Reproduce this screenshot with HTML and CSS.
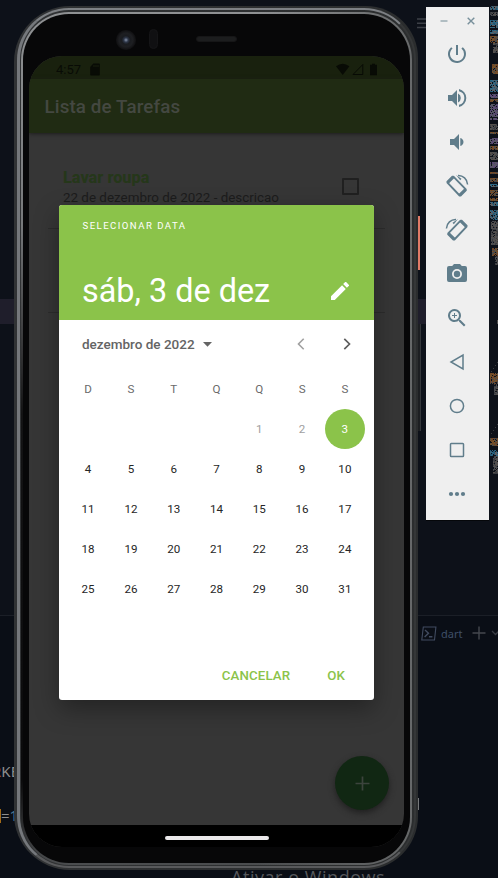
FILE: index.html
```html
<!DOCTYPE html>
<html lang="pt-BR">
<head>
<meta charset="utf-8">
<title>Lista de Tarefas</title>
<link rel="stylesheet" href="styles.css">
</head>
<body>
<div class="desktop">
  <div class="editor">
    <div class="line-highlight"></div>
    <div class="panel-border"></div>
    <svg class="menu-lines" width="9" height="11" viewBox="0 0 9 11"><path d="M0 1h9M0 5.2h9M0 9.4h9" stroke="#3d4047" stroke-width="1.5"/></svg>
    <div class="terminal-tab">
      <svg width="16" height="15" viewBox="0 0 16 15" fill="none" stroke="#414b60" stroke-width="1.1"><path d="M2.3 1h12.6l-1.4 13H.8z"/><path d="M4 4l3.500 3.200L3.600 11M8 10.700h3.400" stroke-width="1.4"/></svg>
      <span>dart</span>
      <svg class="tab-plus" width="14" height="14" viewBox="0 0 14 14"><path d="M7 .5v13M.5 7h13" stroke="#45484f" stroke-width="1.4"/></svg>
      <svg width="9" height="6" viewBox="0 0 9 6" fill="none"><path d="M1 1l3.500 3.500L8 1" stroke="#383b43" stroke-width="1.3"/></svg>
    </div>
    <div class="code code-a"><b>R</b>KE</div>
    <div class="code code-b"><i></i>=<em>1</em></div>
    <div class="watermark">Ativar o Windows</div>
    <svg class="minimap" id="minimap" width="8" height="480" viewBox="0 0 8 480"></svg>
  </div>

  <div class="side-key power"></div>
  <div class="side-key volume"></div>
  <div class="side-key edge-top"></div>
  <div class="side-key edge-bottom"></div>

  <div class="phone">
    <div class="bezel">
      <div class="camera"></div>
      <div class="sensor"></div>
      <div class="speaker"></div>
      <div class="screen">
        <div class="statusbar">
          <span>4:57</span>
          <svg class="sd" width="10" height="13" viewBox="0 0 10 13"><path d="M3.300.5H9a.8.8 0 0 1 .8.8v10.400a.8.8 0 0 1-.8.8H1a.8.8 0 0 1-.8-.8V4z" fill="#080b05"/><path d="M4 2v2M6 2v2M8 2v2" stroke="#19210e"/></svg>
          <svg class="status-right" width="42" height="13" viewBox="0 0 42 13"><path d="M0 3.300Q6.700-1.700 13.400 3.300L6.700 12z" fill="#080b05"/><path d="M17 11.500L26.800 1.500v10z" fill="none" stroke="#080b05" stroke-width="1"/><path d="M36 .7h3v1.100h2V12.200h-7V1.800h2z" fill="#080b05"/></svg>
        </div>
        <div class="appbar">Lista de Tarefas</div>
        <div class="list">
          <div class="task">
            <div><h2>Lavar roupa</h2><p>22 de dezembro de 2022 - descricao</p></div>
            <div class="checkbox"></div>
          </div>
          <div class="task second"></div>
        </div>
        <div class="navbar"><div class="pill"></div></div>
        <div class="fab"><svg width="15" height="15" viewBox="0 0 15 15"><path d="M7.500.5v14M.5 7.500h14" stroke="#3c443d" stroke-width="1.7"/></svg></div>
      </div>
    </div>
  </div>

  <div class="dialog">
    <div class="dialog-head">
      <div class="overline">SELECIONAR DATA</div>
      <div class="headline"><span>sáb, 3 de dez</span>
        <svg width="18" height="18" viewBox="3 3 18 18"><path d="M3 17.250V21h3.750L17.810 9.940l-3.750-3.750L3 17.250zM20.710 7.040a1 1 0 0 0 0-1.410l-2.340-2.340a1 1 0 0 0-1.410 0l-1.830 1.830 3.750 3.750 1.830-1.830z" fill="#fff"/></svg>
      </div>
    </div>
    <div class="month">
      <span>dezembro de 2022</span>
      <svg width="9" height="5" viewBox="0 0 9 5"><path d="M0 0h9L4.500 4.700z" fill="#646464"/></svg>
      <svg class="prev" width="8" height="12" viewBox="0 0 8 12" fill="none"><path d="M6.700.8L1.500 6l5.200 5.200" stroke="#a0a0a0" stroke-width="1.6"/></svg>
      <svg class="next" width="8" height="12" viewBox="0 0 8 12" fill="none"><path d="M1.300.8L6.500 6l-5.200 5.200" stroke="#5d5d5d" stroke-width="1.7"/></svg>
    </div>
    <div class="calendar">
      <span class="wd">D</span><span class="wd">S</span><span class="wd">T</span><span class="wd">Q</span><span class="wd">Q</span><span class="wd">S</span><span class="wd">S</span>
      <span></span><span></span><span></span><span></span><span class="past">1</span><span class="past">2</span><span class="selected">3</span>
      <span>4</span><span>5</span><span>6</span><span>7</span><span>8</span><span>9</span><span>10</span>
      <span>11</span><span>12</span><span>13</span><span>14</span><span>15</span><span>16</span><span>17</span>
      <span>18</span><span>19</span><span>20</span><span>21</span><span>22</span><span>23</span><span>24</span>
      <span>25</span><span>26</span><span>27</span><span>28</span><span>29</span><span>30</span><span>31</span>
    </div>
    <div class="actions"><span>CANCELAR</span><span>OK</span></div>
  </div>

  <div class="toolbar">
    <div class="window-buttons">
      <svg width="8" height="8" viewBox="0 0 8 8"><path d="M.5 4h7" stroke="#8fa2aa" stroke-width="1.3"/></svg>
      <svg width="8" height="8" viewBox="0 0 8 8"><path d="M.7.7l6.600 6.600M7.300.7L.7 7.300" stroke="#78909b" stroke-width="1.4"/></svg>
    </div>
    <div class="tool"><svg viewBox="0 0 24 24"><path d="M13 3h-2v10h2V3zm4.830 2.170l-1.420 1.420A6.920 6.920 0 0 1 19 12a7 7 0 1 1-11.420-5.420L6.170 5.170A9 9 0 1 0 21 12a8.940 8.940 0 0 0-3.170-6.830z"/></svg></div>
    <div class="tool"><svg viewBox="0 0 24 24"><path d="M3 9v6h4l5 5V4L7 9H3zM13 7.500v9a5 5 0 0 0 0-9zM14 3v2.200a7 7 0 0 1 0 13.600V21a9.200 9.200 0 0 0 0-18z"/></svg></div>
    <div class="tool"><svg viewBox="0 0 24 24"><path d="M5 9v6h4l5 5V4L9 9H5zm13.500 3A4.500 4.500 0 0 0 15.300 8v8a4.500 4.500 0 0 0 3.200-4z"/></svg></div>
    <div class="tool"><svg viewBox="0 0 24 24"><path class="device" d="M8.400 2.700L2.400 8.700 14.600 21.500 20.800 15.300z"/><path class="device-edge" d="M8.400 2.700L2.400 8.700M14.600 21.500L20.800 15.300"/><path class="arc" d="M13 1.500C18 1.300 22.300 5 22.600 10.500"/><path d="M11 1l5.500 3.700-1.300 1.500z"/></svg></div>
    <div class="tool flip"><svg viewBox="0 0 24 24"><path class="device" d="M8.400 2.700L2.400 8.700 14.600 21.500 20.800 15.300z"/><path class="device-edge" d="M8.400 2.700L2.400 8.700M14.600 21.500L20.800 15.300"/><path class="arc" d="M13 1.500C18 1.300 22.300 5 22.600 10.500"/><path d="M11 1l5.500 3.700-1.300 1.500z"/></svg></div>
    <div class="tool"><svg viewBox="0 0 24 24"><circle cx="12" cy="12" r="3.200"/><path d="M9 2L7.200 4H4a2 2 0 0 0-2 2v12a2 2 0 0 0 2 2h16a2 2 0 0 0 2-2V6a2 2 0 0 0-2-2h-3.200L15 2H9zm3 15a5 5 0 1 1 0-10 5 5 0 0 1 0 10z"/></svg></div>
    <div class="tool"><svg viewBox="0 0 24 24"><path d="M15.500 14h-.79l-.28-.27A6.500 6.500 0 1 0 13.730 14.430l.27.28v.79l5 4.990L20.490 19l-4.990-5zm-6 0a4.500 4.500 0 1 1 0-9 4.500 4.500 0 0 1 0 9zM9 7h1v2h2v1h-2v2H9v-2H7V9h2z"/></svg></div>
    <div class="tool line"><svg viewBox="0 0 24 24"><path d="M18 5v14L6 12z"/></svg></div>
    <div class="tool line"><svg viewBox="0 0 24 24"><circle cx="12" cy="12" r="6.600"/></svg></div>
    <div class="tool line"><svg viewBox="0 0 24 24"><rect x="5.500" y="5.500" width="13" height="13" rx=".8"/></svg></div>
    <div class="tool"><svg viewBox="0 0 24 24"><circle cx="6" cy="12" r="2.100"/><circle cx="12" cy="12" r="2.100"/><circle cx="18" cy="12" r="2.100"/></svg></div>
  </div>
</div>
<script src="minimap.js"></script>
</body>
</html>
```
FILE: styles.css
```css
* { box-sizing: border-box; }
body { margin: 0; font-family: Roboto, sans-serif; background: #0d1017; }
svg { display: block; flex: none; }
.desktop { position: relative; width: 498px; height: 878px; overflow: hidden; background: #0d1119; }
.editor { position: absolute; inset: 0; }
.line-highlight { position: absolute; top: 299px; left: 0; width: 426px; height: 25px; background: #1f1e2b; }
.panel-border { position: absolute; top: 615px; left: 0; right: 0; height: 263px; border-top: 1px solid #1b1f27; background: #0a0e16; }
.menu-lines { position: absolute; left: 417px; top: 18px; }
.terminal-tab { position: absolute; left: 421px; top: 624px; height: 18px; display: flex; align-items: center; color: #3f4f67; font: 11px "Noto Sans", sans-serif; }
.terminal-tab span { margin-left: 4px; }
.tab-plus { margin: 0 5px 0 10px; }
.code { position: absolute; font: 15px/20px "Noto Sans", sans-serif; color: #8d8d8d; white-space: nowrap; }
.code b { color: #8c462f; font-weight: 400; }
.code em { color: #4a7891; font-style: normal; }
.code i { width: 1px; height: 14px; background: #a46b18; display: inline-block; vertical-align: -2px; }
.code-a { left: -8px; top: 761px; }
.code-b { left: 0; top: 805px; }
.watermark { position: absolute; left: 231px; top: 865px; font: 18px/24px "Open Sans", sans-serif; letter-spacing: .55px; color: #56585c; white-space: nowrap; }
.minimap { position: absolute; left: 490px; top: 0; }

.side-key { position: absolute; left: 417px; width: 3px; }
.power { top: 216px; height: 54px; background: #e07a67; }
.volume { top: 324px; height: 107px; width: 4px; background: #1d1f22; border-right: 1px solid #33363a; }
.edge-top { top: 80px; height: 137px; width: 1px; background: #55585b; left: 417px; }
.edge-bottom { top: 798px; height: 12px; width: 2px; background: #77797b; }

.phone { position: absolute; isolation: isolate; left: 14px; top: 6px; width: 404px; height: 864px; border-radius: 56px 52px 54px 56px; padding: 3px; background: linear-gradient(90deg, #303234, #2b2d2e); }
.phone::before { content: ""; position: absolute; inset: 2px 2px 2px 3px; border-radius: 52px; border: 2px solid; border-color: #7d8084 #353738 #58595b #75787c; border-left-width: 3px; }
.phone::after { content: ""; position: absolute; z-index: 0; inset: 6px 6px 5px 7px; border-radius: 48px; background: linear-gradient(90deg, transparent 60%, #67696a), linear-gradient(#8f9193, #77797b 25%, #131314 47%, #0a0a0b 90%, #4b4d4f); }
.bezel { position: relative; z-index: 1; width: 100%; height: 100%; padding: 47px 11px 20px 12px; }
.bezel::before { content: ""; position: absolute; inset: 5px 5px 4px 6px; border-radius: 46px; background: #070708; }
.screen { position: relative; width: 375px; height: 791px; border-radius: 33px; overflow: hidden; background: #363636; display: flex; flex-direction: column; }
.camera { position: absolute; left: 99px; top: 21px; width: 20px; height: 20px; border-radius: 50%; background: radial-gradient(circle, #8793aa 0, #2d3648 16%, #1a1c20 30%, #1e1f22 48%, #121214 66%); }
.sensor { position: absolute; left: 132px; top: 20px; width: 9px; height: 20px; border-radius: 5px; background: #101012; border: 1px solid #151517; }
.speaker { position: absolute; left: 179px; top: 27px; width: 41px; height: 6px; border-radius: 3px; background: #1c1d1e; border: 1px solid #161617; }
.statusbar { height: 23px; flex: none; background: #19210e; color: #080b05; font-size: 13px; display: flex; align-items: center; padding: 3px 26px 0 27px; }
.sd { margin-left: 9px; }
.status-right { margin-left: auto; }
.appbar { height: 54px; flex: none; background: #202b13; color: #444841; font-size: 18.800px; font-weight: 500; line-height: 57px; padding-left: 15.500px; box-shadow: 0 1px 4px #1c1c1c; letter-spacing: .12px; }
.list { flex: 1; padding: 12px 19px 0; }
.task { height: 84px; border-bottom: 1px solid #2c2c2c; display: flex; justify-content: space-between; padding: 24px 26px 0 15px; }
.task h2 { margin: 0; font-size: 16.300px; line-height: 18px; font-weight: 800; color: #25371a; }
.task p { margin: 2px 0 0; font-size: 13.400px; line-height: 18px; color: #1c1c1c; white-space: nowrap; }
.checkbox { width: 17px; height: 17px; margin-top: 9px; border: 2px solid #202020; border-radius: 1px; }
.navbar { height: 22px; flex: none; background: #000; display: flex; justify-content: center; padding-top: 11px; }
.pill { width: 104px; height: 4px; border-radius: 2px; background: #ebe9eb; }
.fab { position: absolute; right: 15px; bottom: 37px; width: 54px; height: 54px; border-radius: 50%; background: #112713; display: grid; place-items: center; box-shadow: 0 3px 6px #202020; }

.dialog { position: absolute; left: 59px; top: 205px; width: 315px; height: 494.500px; border-radius: 3px; background: #fff; display: flex; flex-direction: column; box-shadow: 0 9px 24px rgba(0,0,0,.35); }
.dialog-head { height: 114.500px; border-radius: 3px 3px 0 0; background: #8bc34a; color: #fff; padding: 15px 25px 0 23px; }
.overline { font-size: 9.600px; line-height: 12px; letter-spacing: 1.450px; padding-left: .5px; }
.headline { display: flex; justify-content: space-between; align-items: center; margin-top: 39px; font-size: 32.400px; line-height: 40px; }
.month { height: 49px; display: flex; align-items: center; padding: 0 23px 0 23px; color: #646464; font-size: 13.500px; font-weight: 500; }
.month span { margin-right: 8px; }
.prev { margin-left: auto; margin-right: 38px; }
.calendar { display: grid; grid-template-columns: repeat(7, 42.800px); grid-auto-rows: 40px; justify-content: center; place-items: center; font-size: 11.600px; color: #262626; }
.wd { color: #6a6a6a; }
.past { color: #a0a0a0; }
.selected { width: 40px; height: 40px; border-radius: 50%; background: #8bc34a; color: #fff; line-height: 40px; text-align: center; }
.actions { margin-top: auto; height: 49px; display: flex; justify-content: flex-end; align-items: center; gap: 37px; padding-right: 29px; color: #8bc34a; font-size: 13.300px; font-weight: 500; letter-spacing: .1px; }

.toolbar { position: absolute; left: 426px; top: 7px; width: 63px; height: 514px; background: #efefef; border-bottom: 1px solid #05070a; display: flex; flex-direction: column; align-items: center; padding-right: 1px; }
.window-buttons { height: 25px; width: 100%; display: flex; justify-content: space-between; padding: 10px 13px 0 14px; }
.tool { height: 44px; display: grid; place-items: center; fill: #607d8b; }
.tool svg { width: 24px; height: 24px; }
.line { fill: none; stroke: #607d8b; stroke-width: 1.500; }
.device { fill: none; stroke: #607d8b; stroke-width: 1.900; stroke-linejoin: round; }
.device-edge { stroke: #607d8b; stroke-width: 3.200; }
.arc { fill: none; stroke: #607d8b; stroke-width: 1.500; }
.flip svg { transform: scaleX(-1); }
```
FILE: minimap.js
```js
const map = document.getElementById("minimap");
const palettes = {
  blue: ["#25566f", "#2a6885", "#5c5f63"],
  gray: ["#4a4c50", "#3a3c40", "#55504c"],
  brown: ["#765128", "#6e4527", "#4c4a48"],
  purple: ["#5e4b75", "#4f4468", "#565860"]
};
const bands = [
  [6, 10, "blue"], [12, 16, "gray"], [20, 28, "blue"], [30, 34, "blue"], [36, 43, "brown"], [43, 53, "gray", 3],
  [64, 74, "brown", 2], [80, 92, "blue"], [94, 98, "purple"], [99, 102, "brown"], [104, 117, "purple"],
  [118, 120, "purple"], [124, 130, "gray"], [132, 134, "brown"], [138, 144, "purple"], [146, 150, "brown"],
  [152, 160, "gray"], [162, 168, "purple"], [172, 174, "brown"], [178, 182, "brown"], [184, 187, "blue"],
  [190, 196, "brown"], [198, 201, "brown"], [202, 206, "blue"], [210, 220, "blue"], [221, 245, "gray", 1],
  [248, 256, "brown", 2], [256, 265, "gray", 5], [320, 325, "gray", 7], [373, 384, "brown"], [384, 395, "gray", 4],
  [438, 446, "brown"], [450, 456, "blue"], [456, 474, "gray", 3]
];
let seed = 7;
const rnd = () => (seed = (seed * 16807) % 2147483647) / 2147483647;
function dot(x, y, fill) {
  const r = document.createElementNS("http://www.w3.org/2000/svg", "rect");
  r.setAttribute("x", x);
  r.setAttribute("y", y);
  r.setAttribute("width", 1);
  r.setAttribute("height", 1);
  r.setAttribute("fill", fill);
  map.append(r);
}
for (const [from, to, name, start = 0] of bands) {
  for (let y = from; y < to; y += 1) {
    for (let x = start; x < 8; x += 1) {
      if (rnd() > 0.15) dot(x, y, palettes[name][Math.floor(rnd() * 3)]);
    }
  }
}
for (const base of [371, 433]) {
  for (let i = 0; i < 4; i += 1) dot(1 + i * 2, base - i * 3, "#3a3c40");
}
```
